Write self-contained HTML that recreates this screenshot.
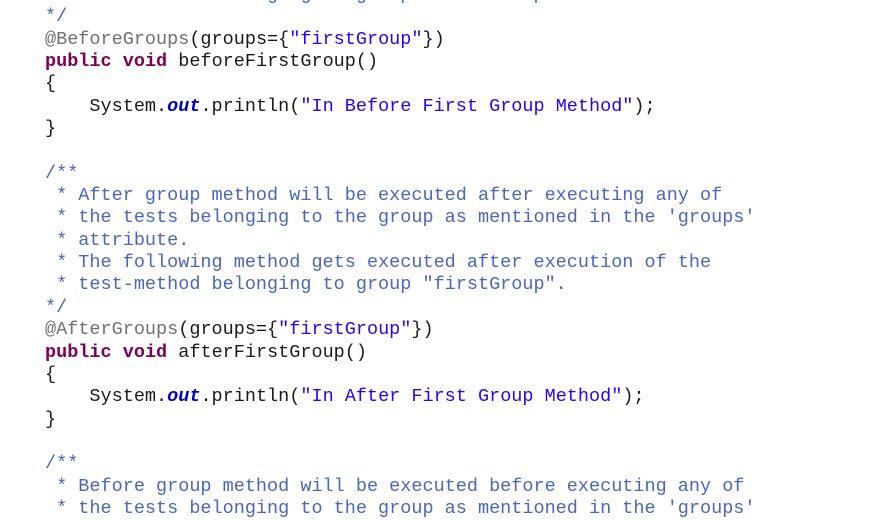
<!DOCTYPE html>
<html><head><style>
html,body{margin:0;padding:0;background:#fff;width:882px;height:507px;overflow:hidden}
pre{position:absolute;left:45px;top:-16px;margin:0;font-family:"Liberation Mono",monospace;font-size:18.5px;line-height:22.35px;color:#1a1a1a}
.c{color:#4a66c0}.k{color:#7f0055;font-weight:bold}.s{color:#2a00ff}.a{color:#707070}.f{color:#0000c0;font-weight:bold;font-style:italic}
</style></head><body>
<pre><span class="c"> * test-method belonging to group "firstGroup".</span>
<span class="c">*/</span>
<span class="a">@BeforeGroups</span>(groups={<span class="s">"firstGroup"</span>})
<span class="k">public</span> <span class="k">void</span> beforeFirstGroup()
{
    System.<span class="f">out</span>.println(<span class="s">"In Before First Group Method"</span>);
}

<span class="c">/**</span>
<span class="c"> * After group method will be executed after executing any of</span>
<span class="c"> * the tests belonging to the group as mentioned in the 'groups'</span>
<span class="c"> * attribute.</span>
<span class="c"> * The following method gets executed after execution of the</span>
<span class="c"> * test-method belonging to group "firstGroup".</span>
<span class="c">*/</span>
<span class="a">@AfterGroups</span>(groups={<span class="s">"firstGroup"</span>})
<span class="k">public</span> <span class="k">void</span> afterFirstGroup()
{
    System.<span class="f">out</span>.println(<span class="s">"In After First Group Method"</span>);
}

<span class="c">/**</span>
<span class="c"> * Before group method will be executed before executing any of</span>
<span class="c"> * the tests belonging to the group as mentioned in the 'groups'</span>
</pre>
</body></html>
